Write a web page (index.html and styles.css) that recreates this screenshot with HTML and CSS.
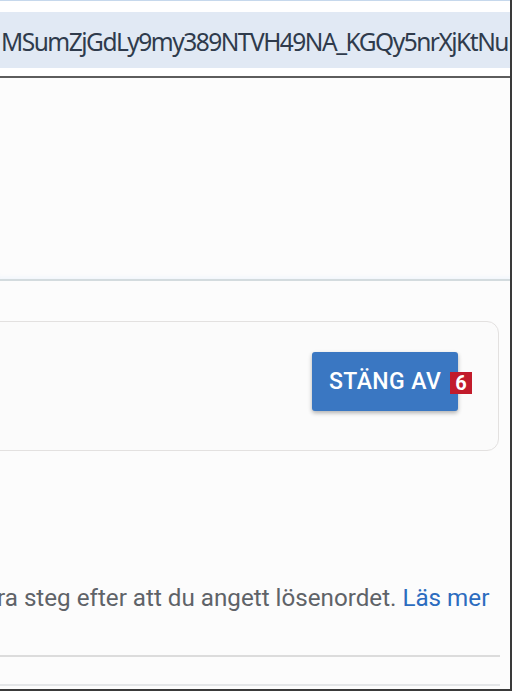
FILE: index.html
```html
<!DOCTYPE html>
<html lang="sv">
<head>
<meta charset="utf-8">
<link rel="stylesheet" href="styles.css">
</head>
<body>
<div class="frame">
  <div class="chrome">
    <div class="chrome-top"></div>
    <div class="address">
      <span class="url">MSumZjGdLy9my389NTVH49NA_KGQy5nrXjKtNuE</span>
    </div>
    <div class="chrome-gap"></div>
  </div>
  <div class="page">
    <div class="header-space"></div>
    <div class="card">
      <div class="card-inner">
        <button class="btn">STÄNG AV<span class="badge">6</span></button>
      </div>
    </div>
    <p class="desc">ra steg efter att du angett lösenordet. <a class="link">Läs mer</a></p>
    <div class="rule rule-one"></div>
    <div class="rule rule-two"></div>
  </div>
</div>
</body>
</html>
```

FILE: styles.css
```css
html, body {
  margin: 0;
  padding: 0;
  background: #ffffff;
}
.frame {
  width: 512px;
  height: 691px;
  box-sizing: border-box;
  border-right: 2px solid #3a3a3a;
  border-bottom: 2px solid #3a3a3a;
  overflow: hidden;
  display: flex;
  flex-direction: column;
  background: #fcfcfc;
}
.chrome {
  background: #ffffff;
  border-bottom: 2px solid #5d5d5d;
}
.chrome-top {
  height: 12px;
  border-top: 1px solid #c6d8ec;
  box-sizing: border-box;
}
.address {
  height: 56px;
  background: #e1e9f4;
  display: flex;
  align-items: center;
  overflow: hidden;
}
.url {
  font-family: "Noto Sans", "Open Sans", sans-serif;
  font-size: 24.5px;
  color: #2f3b4c;
  white-space: nowrap;
  letter-spacing: -1.5px;
  padding-left: 1px;
  margin-top: 2px;
}
.chrome-gap {
  height: 8px;
}
.page {
  display: flex;
  flex-direction: column;
  flex: 1;
  font-family: Roboto, "Liberation Sans", sans-serif;
}
.header-space {
  height: 201px;
  border-bottom: 2px solid #d3dbde;
  box-shadow: inset 0 -5px 4px -3px #f1f6fc;
}
.card {
  margin-top: 40px;
  margin-left: -20px;
  margin-right: 11px;
  height: 130px;
  box-sizing: border-box;
  border: 1px solid #e3e1e0;
  border-radius: 12px;
  background: #fbfbfb;
}
.card-inner {
  display: flex;
  justify-content: flex-end;
  padding: 30px 40px 0 0;
}
.btn {
  position: relative;
  width: 146px;
  height: 59px;
  border: none;
  border-radius: 3px;
  background: #3a77c2;
  color: #ffffff;
  font-family: Roboto, "Liberation Sans", sans-serif;
  font-weight: 500;
  font-size: 23px;
  letter-spacing: 0.4px;
  text-align: left;
  padding: 0 0 0 17px;
  box-shadow: 0 2px 4px rgba(0, 0, 0, 0.3);
}
.badge {
  position: absolute;
  right: -14px;
  top: 20px;
  width: 22px;
  height: 22px;
  background: #c21b2b;
  color: #ffffff;
  font-family: Roboto, "Liberation Sans", sans-serif;
  font-weight: 700;
  font-size: 20px;
  line-height: 22px;
  text-align: center;
  letter-spacing: 0;
}
.desc {
  margin: 133px 0 0 -3px;
  font-size: 24.2px;
  line-height: 28px;
  color: #5f6368;
  white-space: nowrap;
}
.link {
  color: #2c6cbf;
}
.rule {
  height: 2px;
  background: #dcdcdc;
  margin-right: 10px;
}
.rule-one {
  margin-top: 43px;
}
.rule-two {
  margin-top: 27px;
  background: #e4e6e8;
}
```
